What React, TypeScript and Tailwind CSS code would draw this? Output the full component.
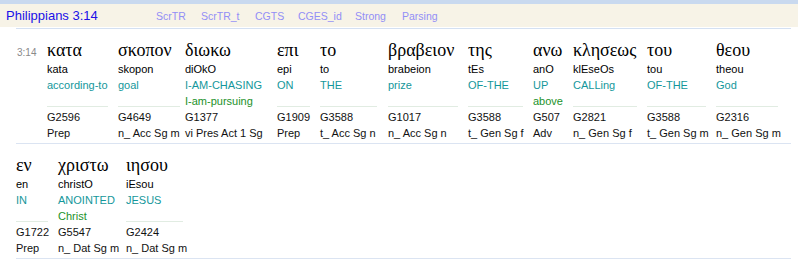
import React from "react";

type Word = {
  g: string;
  t: string;
  e: string[];
  s: string;
  p: string;
  w: string;
  sep: string | null;
};

const row1: Word[] = [
  { g: "κατα", t: "kata", e: ["according-to"], s: "G2596", p: "Prep", w: "w-[71px]", sep: "w-[61px]" },
  { g: "σκοπον", t: "skopon", e: ["goal"], s: "G4649", p: "n_ Acc Sg m", w: "w-[67px]", sep: "w-[62px]" },
  { g: "διωκω", t: "diOkO", e: ["I-AM-CHASING", "I-am-pursuing"], s: "G1377", p: "vi Pres Act 1 Sg", w: "w-[92px]", sep: null },
  { g: "επι", t: "epi", e: ["ON"], s: "G1909", p: "Prep", w: "w-[43px]", sep: "w-[33px]" },
  { g: "το", t: "to", e: ["THE"], s: "G3588", p: "t_ Acc Sg n", w: "w-[68px]", sep: "w-[57px]" },
  { g: "βραβειον", t: "brabeion", e: ["prize"], s: "G1017", p: "n_ Acc Sg n", w: "w-[80px]", sep: "w-[70px]" },
  { g: "της", t: "tEs", e: ["OF-THE"], s: "G3588", p: "t_ Gen Sg f", w: "w-[65px]", sep: "w-[55px]" },
  { g: "ανω", t: "anO", e: ["UP", "above"], s: "G507", p: "Adv", w: "w-[40px]", sep: null },
  { g: "κλησεως", t: "klEseOs", e: ["CALLing"], s: "G2821", p: "n_ Gen Sg f", w: "w-[74px]", sep: "w-[64px]" },
  { g: "του", t: "tou", e: ["OF-THE"], s: "G3588", p: "t_ Gen Sg m", w: "w-[69px]", sep: "w-[59px]" },
  { g: "θεου", t: "theou", e: ["God"], s: "G2316", p: "n_ Gen Sg m", w: "w-[72px]", sep: "w-[62px]" },
];

const row2: Word[] = [
  { g: "εν", t: "en", e: ["IN"], s: "G1722", p: "Prep", w: "w-[42px]", sep: "w-[32px]" },
  { g: "χριστω", t: "christO", e: ["ANOINTED", "Christ"], s: "G5547", p: "n_ Dat Sg m", w: "w-[68px]", sep: null },
  { g: "ιησου", t: "iEsou", e: ["JESUS"], s: "G2424", p: "n_ Dat Sg m", w: "w-[67px]", sep: "w-[57px]" },
];

const links = [
  { label: "ScrTR", w: "w-[45px]" },
  { label: "ScrTR_t", w: "w-[54px]" },
  { label: "CGTS", w: "w-[43px]" },
  { label: "CGES_id", w: "w-[57px]" },
  { label: "Strong", w: "w-[47px]" },
  { label: "Parsing", w: "" },
];

const sans = "font-['Liberation_Sans',Arial,sans-serif]";
const serif = "font-['Liberation_Serif','Times_New_Roman',serif]";

function Column({ w }: { w: Word }) {
  return (
    <div className={`${w.w} shrink-0 flex flex-col`}>
      <div className={`${serif} text-[18px] leading-[22px] h-[22px] text-black whitespace-nowrap`}>{w.g}</div>
      <div className="text-[11px] leading-[16px] h-[16px] text-black whitespace-nowrap">{w.t}</div>
      <div className="h-[29px] text-[11px] leading-[16px] whitespace-nowrap">
        <div className="text-[#14979b]">{w.e[0]}</div>
        {w.e[1] && <div className="text-[#22922a]">{w.e[1]}</div>}
      </div>
      {w.sep ? <div className={`${w.sep} h-px bg-[#e1ece2]`} /> : <div className="h-px" />}
      <div className="h-[2px]" />
      <div className="text-[11px] leading-[16px] h-[16px] text-[#111] whitespace-nowrap">{w.s}</div>
      <div className="text-[11px] leading-[16px] h-[16px] text-[#111] whitespace-nowrap">{w.p}</div>
    </div>
  );
}

export default function App() {
  return (
    <div className={`w-[798px] h-[269px] bg-white ${sans} overflow-hidden`}>
      <div className="h-[4px] bg-[#c9d9ef]" />
      <div className="h-[23px] bg-[#f7f3e7] flex items-baseline pl-[6px]">
        <div className="w-[150px] text-[13px] leading-[23px] text-[#2010e8] whitespace-nowrap">Philippians 3:14</div>
        {links.map((l) => (
          <div key={l.label} className={`${l.w} text-[10.5px] leading-[23px] text-[#928ef6] whitespace-nowrap`}>
            {l.label}
          </div>
        ))}
      </div>
      <div className="h-px" />
      <div className="ml-[16px] mr-[7px] border-t border-[#d4e0f2]">
        <div className="flex pt-[10px] pb-[2px] border-b border-[#dbe4f2]">
          <div className="w-[31px] shrink-0 pl-[1px]">
            <div className={`${serif} text-[18px] leading-[22px] h-[22px]`}>
              <span className={`${sans} text-[10px] leading-none text-[#8a8a8a]`}>3:14</span>
            </div>
          </div>
          {row1.map((w, i) => (
            <Column key={i} w={w} />
          ))}
        </div>
        <div className="flex pt-[10px] pb-[2px] border-b border-[#dbe4f2]">
          {row2.map((w, i) => (
            <Column key={i} w={w} />
          ))}
        </div>
      </div>
    </div>
  );
}
